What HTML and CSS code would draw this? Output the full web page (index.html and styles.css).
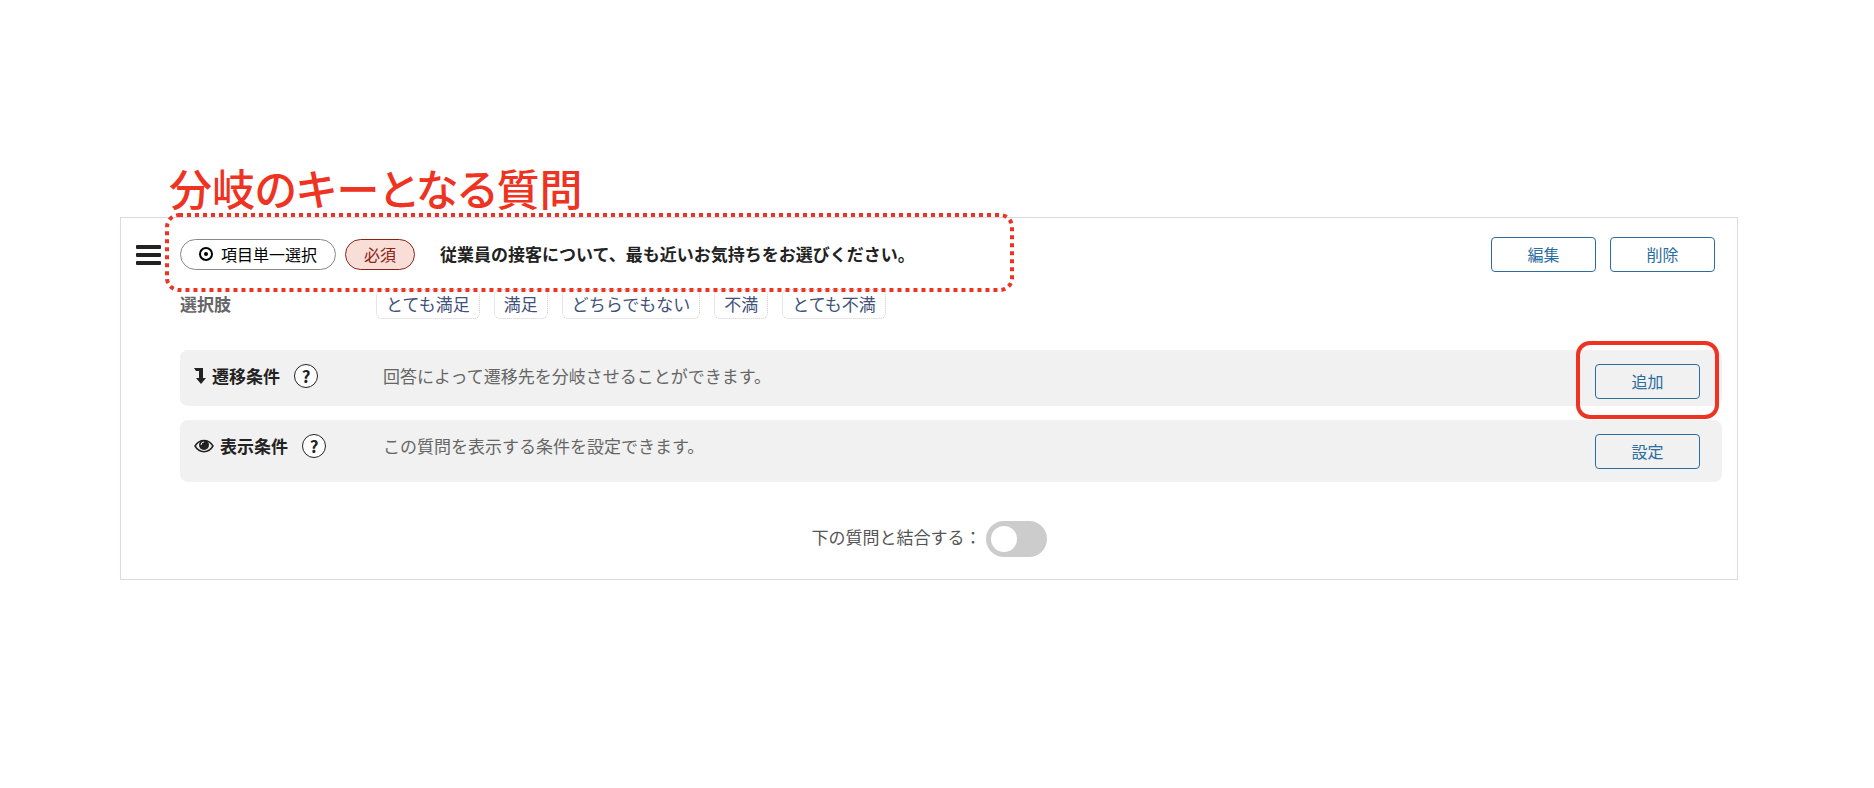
FILE: index.html
```html
<!DOCTYPE html>
<html lang="ja">
<head>
    <meta charset="UTF-8">
    <meta name="viewport" content="width=device-width, initial-scale=1.0">
    <title>質問の編集</title>
    <link rel="stylesheet" href="styles.css">
</head>
<body>
    <main class="page">
        <h1 class="caption">分岐のキーとなる質問</h1>
        <section class="card">
            <button type="button" class="drag-handle" aria-label="並び替え">
                <span></span>
                <span></span>
                <span></span>
            </button>
            <div class="question">
                <div class="question-head">
                    <span class="pill">
                        <svg width="14" height="14" viewBox="0 0 14 14" aria-hidden="true">
                            <circle cx="7" cy="7" r="6" fill="none" stroke="#000" stroke-width="2"/>
                            <circle cx="7" cy="7" r="2" fill="#000"/>
                        </svg>
                        項目単一選択
                    </span>
                    <span class="pill pill-required">必須</span>
                    <h2 class="question-title">従業員の接客について、最も近いお気持ちをお選びください。</h2>
                    <div class="question-actions">
                        <button type="button" class="btn">編集</button>
                        <button type="button" class="btn">削除</button>
                    </div>
                    <svg class="dotted-frame" aria-hidden="true">
                        <rect width="100%" height="100%" rx="12"/>
                    </svg>
                </div>
                <div class="choices">
                    <h3 class="choices-label">選択肢</h3>
                    <ul class="choices-list">
                        <li>とても満足</li>
                        <li>満足</li>
                        <li>どちらでもない</li>
                        <li>不満</li>
                        <li>とても不満</li>
                    </ul>
                </div>
                <div class="condition">
                    <h3 class="condition-label">
                        <svg width="12" height="16" viewBox="0 0 12 16" aria-hidden="true">
                            <path d="M0 0H9V10H12L7 16L2 10H5V3H2Z" fill="#222"/>
                        </svg>
                        遷移条件
                        <button type="button" class="help" aria-label="遷移条件のヘルプ">?</button>
                    </h3>
                    <p class="condition-text">回答によって遷移先を分岐させることができます。</p>
                    <div class="condition-action marked">
                        <button type="button" class="btn">追加</button>
                    </div>
                </div>
                <div class="condition condition-display">
                    <h3 class="condition-label">
                        <svg width="20" height="14" viewBox="0 0 40 28" aria-hidden="true">
                            <path d="M2 14C11 -1 29 -1 38 14C29 29 11 29 2 14Z" fill="none" stroke="#222" stroke-width="3"/>
                            <circle cx="20" cy="12" r="10" fill="#222"/>
                            <path d="M14 12A6 6 0 0 1 20 6" fill="none" stroke="#f1f1f1" stroke-width="2"/>
                        </svg>
                        表示条件
                        <button type="button" class="help" aria-label="表示条件のヘルプ">?</button>
                    </h3>
                    <p class="condition-text">この質問を表示する条件を設定できます。</p>
                    <div class="condition-action">
                        <button type="button" class="btn">設定</button>
                    </div>
                </div>
            </div>
            <div class="merge">
                <label for="merge-next">下の質問と結合する：</label>
                <input type="checkbox" id="merge-next" class="toggle" role="switch">
            </div>
        </section>
    </main>
</body>
</html>
```
FILE: styles.css
```css
*, *::before, *::after {
    box-sizing: border-box;
}
body {
    background-color: #fff;
    color: #222;
    font-family: "Noto Sans CJK JP", sans-serif;
    font-size: 17px;
    line-height: 26px;
    margin: 0;
}
h1, h2, h3, p, ul {
    margin: 0;
    padding: 0;
    font-size: inherit;
}
.page {
    padding: 160px 136px 0 120px;
}
.caption {
    color: #ee3322;
    font-size: 43px;
    font-weight: 500;
    font-feature-settings: "palt";
    line-height: 54px;
    padding: 0 0 3px 49px;
}
.card {
    display: grid;
    grid-template-columns: 44px 1fr;
    border: 1px solid #d8dae5;
    padding: 19px 15px 22px;
}
.drag-handle {
    display: flex;
    flex-direction: column;
    align-self: start;
    gap: 4px;
    width: 25px;
    margin-top: 8px;
    padding: 0;
    border: 0;
    background: none;
}
.drag-handle span {
    height: 4px;
    width: 25px;
    border-radius: 1px;
    background-color: #222;
}
.question-head {
    position: relative;
    display: flex;
    align-items: center;
    height: 35px;
}
.pill {
    display: flex;
    align-items: center;
    gap: 8px;
    height: 31px;
    margin-right: 9px;
    padding: 0 18px 1px;
    border: 1px solid #888;
    border-radius: 16px;
    color: #000;
    font-size: 16px;
}
.pill-required {
    background-color: #f9ded8;
    border-color: #8b2314;
    color: #8b2314;
}
.question-title {
    font-weight: 700;
    margin-left: 16px;
    padding-bottom: 2px;
}
.question-actions {
    display: flex;
    gap: 14px;
    margin-left: auto;
    margin-right: 7px;
}
.btn {
    width: 105px;
    height: 35px;
    padding: 0 0 2px;
    border: 1px solid #2a6d9e;
    border-radius: 4px;
    background: none;
    color: #2a6d9e;
    font: inherit;
    font-size: 16px;
}
/* dotted mark round the key question */
.dotted-frame {
    position: absolute;
    top: -22px;
    left: -13px;
    width: 845px;
    height: 75px;
    overflow: visible;
    fill: none;
    stroke: #ee3322;
    stroke-width: 4px;
    stroke-dasharray: 4px 4px;
    pointer-events: none;
}
.choices {
    display: flex;
    align-items: center;
    margin-top: 17px;
}
.choices-label {
    width: 196px;
    color: #666;
}
.choices-list {
    display: flex;
    gap: 14px;
    list-style: none;
}
.choices-list li {
    padding: 1px 9px;
    border: 1px dotted #ccc;
    border-radius: 6px;
    color: #3f5179;
}
.condition {
    display: flex;
    align-items: flex-start;
    margin-top: 31px;
    padding: 13px 22px 7px 14px;
    border-radius: 8px;
    background-color: #f1f1f1;
}
.condition-display {
    margin-top: 14px;
    padding-bottom: 13px;
}
.condition-label {
    display: flex;
    align-items: center;
    gap: 6px;
    width: 189px;
}
.help {
    width: 24px;
    height: 24px;
    margin-left: 8px;
    padding: 0;
    border: 1px solid #222;
    border-radius: 50%;
    background-color: #fff;
    color: #222;
    font: inherit;
    line-height: 20px;
}
.condition-text {
    color: #666;
}
.condition-action {
    position: relative;
    margin-top: 1px;
    margin-left: auto;
}
.condition-action .btn {
    display: block;
}
.marked::after {
    content: "";
    position: absolute;
    top: -23px;
    left: -19px;
    width: 143px;
    height: 78px;
    border: 4px solid #ee3322;
    border-radius: 14px;
    pointer-events: none;
}
.merge {
    grid-column: 1 / -1;
    display: flex;
    justify-content: center;
    align-items: center;
    gap: 4px;
    margin-top: 39px;
    color: #555;
}
.merge label {
    padding-bottom: 4px;
}
.toggle {
    appearance: none;
    width: 61px;
    height: 36px;
    margin: 0;
    padding: 5px;
    border-radius: 18px;
    background-color: #ccc;
}
.toggle::before {
    content: "";
    display: block;
    width: 26px;
    height: 26px;
    border-radius: 50%;
    background-color: #fff;
}
.toggle:checked {
    background-color: #2a6d9e;
}
.toggle:checked::before {
    margin-left: auto;
}
```
